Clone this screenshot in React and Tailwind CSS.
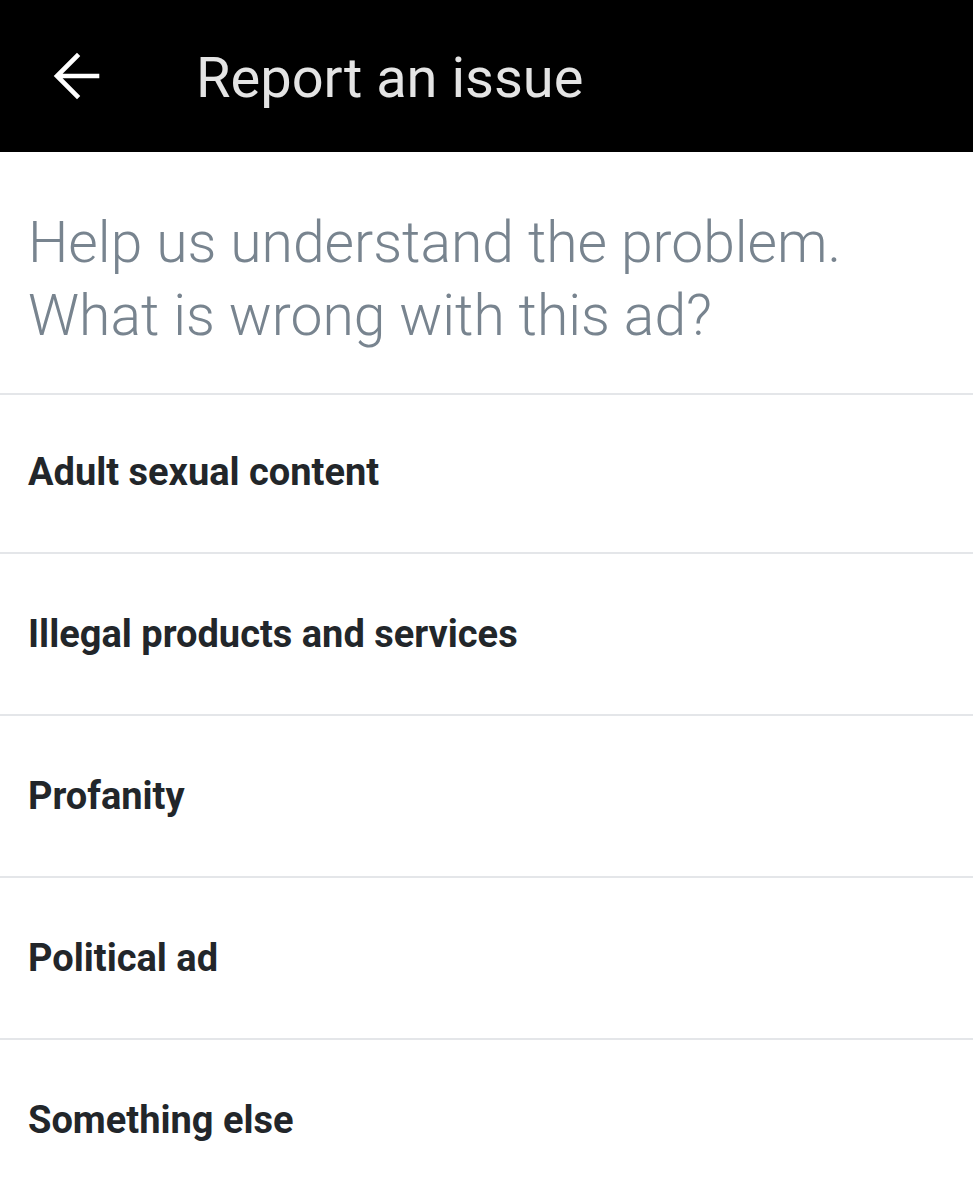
import React from 'react';

const items = [
  'Adult sexual content',
  'Illegal products and services',
  'Profanity',
  'Political ad',
  'Something else',
];

const BackArrow = () => (
  <svg width="50" height="50" viewBox="0 0 50 50" fill="none">
    <path
      d="M47 25H9M27 5L7 25l20 20"
      stroke="#ffffff"
      strokeWidth="4.6"
      strokeLinecap="square"
    />
  </svg>
);

const App = () => {
  return (
    <div className="w-[973px] min-h-[1200px] bg-white font-['Roboto',sans-serif]">
      {/* Header */}
      <div className="h-[152px] bg-black flex items-center">
        <div className="w-[196px] pl-[50px] flex items-center">
          <BackArrow />
        </div>
        <h1 className="text-[56px] text-[#e4e4e4] font-normal leading-none pt-[4px]">
          Report an issue
        </h1>
      </div>

      {/* Question */}
      <div className="h-[241px] px-[28px] pt-[54px]">
        <p className="text-[57px] leading-[73px] font-light text-[#78848f]">
          Help us understand the problem.
          <br />
          What is wrong with this ad?
        </p>
      </div>

      {/* Options */}
      <ul>
        {items.map((label, i) => (
          <li
            key={label}
            className={`${i === 0 ? 'h-[159px] pb-[2px]' : 'h-[162px]'} border-t-2 border-[#e4e6e9] flex items-center px-[28px]`}
          >
            <span className="text-[38px] font-bold text-[#22262a]">{label}</span>
          </li>
        ))}
      </ul>
    </div>
  );
};

export default App;
